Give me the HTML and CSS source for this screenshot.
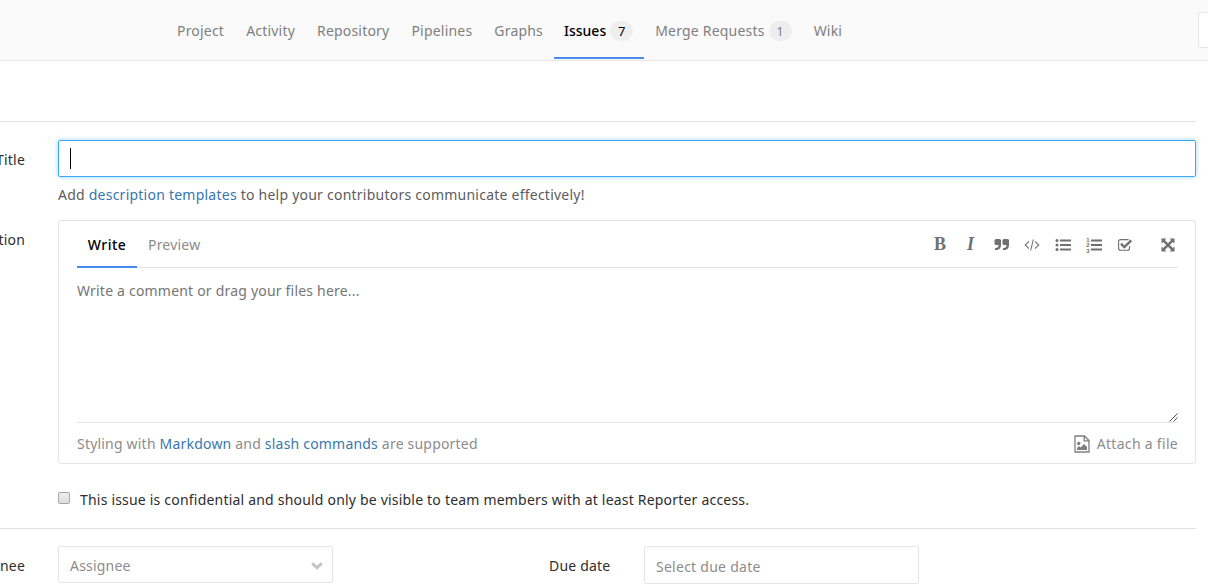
FILE: index.html
```html
<!DOCTYPE html>
<html lang="en">
<head>
<meta charset="utf-8">
<title>New Issue</title>
<link rel="stylesheet" href="styles.css">
</head>
<body>
<header class="topbar">
  <nav class="nav">
    <a class="nav-item">Project</a>
    <a class="nav-item">Activity</a>
    <a class="nav-item">Repository</a>
    <a class="nav-item">Pipelines</a>
    <a class="nav-item">Graphs</a>
    <a class="nav-item active"><span class="nav-text">Issues</span><span class="badge">7</span></a>
    <a class="nav-item"><span class="nav-text">Merge Requests</span><span class="badge">1</span></a>
    <a class="nav-item">Wiki</a>
  </nav>
  <div class="settings"></div>
</header>
<main class="form">
  <div class="row title-row">
    <label class="label">Title</label>
    <div class="field">
      <div class="title-input"><span class="caret"></span></div>
      <p class="hint">Add <a class="link">description templates</a> to help your contributors communicate effectively!</p>
    </div>
  </div>
  <div class="row">
    <label class="label desc-label">Description</label>
    <div class="editor">
      <div class="editor-head">
        <div class="tab tab-active">Write</div>
        <div class="tab tab-preview">Preview</div>
        <div class="tools">
          <span class="tool bold">B</span>
          <span class="tool italic">I</span>
          <span class="tool quote"><svg width="16" height="16" viewBox="0 0 16 16"><path fill="currentColor" d="M2 2h3.500Q7 2 7 3.500V8Q7 13 1.800 13H1v-2h.8Q4.500 11 4.500 8H2Q.5 8 .5 6.500v-3Q.5 2 2 2zM10 2h3.500Q15 2 15 3.500V8Q15 13 9.800 13H9v-2h.8Q12.500 11 12.500 8H10Q8.500 8 8.500 6.500v-3Q8.500 2 10 2z"/></svg></span>
          <span class="tool"><svg width="16" height="16" viewBox="0 0 16 16"><path fill="none" stroke="currentColor" stroke-width="1.050" d="M5 4.300 1.200 8 5 11.700M11 4.300 14.800 8 11 11.700M9.300 2.500 6.700 13.500"/></svg></span>
          <span class="tool"><svg width="16" height="16" viewBox="0 0 16 16" fill="currentColor"><circle cx="2" cy="3.500" r="1.500"/><circle cx="2" cy="8" r="1.500"/><circle cx="2" cy="12.500" r="1.500"/><path d="M5 2.500h11v2H5zM5 7h11v2H5zM5 11.500h11v2H5z"/></svg></span>
          <span class="tool"><svg width="16" height="16" viewBox="0 0 16 16" fill="currentColor"><g class="digits"><text x="0.300" y="5">1</text><text x="0.300" y="10.300">2</text><text x="0.300" y="15.600">3</text></g><path d="M5 2.500h11v2H5zM5 7h11v2H5zM5 11.500h11v2H5z"/></svg></span>
          <span class="tool"><svg width="16" height="16" viewBox="0 0 16 16"><path fill="none" stroke="currentColor" stroke-width="1.100" d="M12.500 9v2.200q0 2-2 2H3.600q-2 0-2-2V4.600q0-2 2-2h6.900q.8 0 1.300.3"/><path fill="none" stroke="currentColor" stroke-width="2.400" d="M4 6.700 7.300 10 14.300 3.300"/></svg></span>
          <span class="tool expand"><svg width="16" height="16" viewBox="0 0 16 16"><path fill="currentColor" d="M1.500 1.500h5L4.900 3.100 8 6.300l3.100-3.200-1.600-1.600h5v5l-1.600-1.600L9.700 8l3.200 3.100 1.600-1.600v5h-5l1.600-1.600L8 9.700l-3.100 3.200 1.600 1.600h-5v-5l1.600 1.600L6.300 8 3.100 4.900 1.500 6.500z"/></svg></span>
        </div>
      </div>
      <div class="editor-body">
        <span class="placeholder">Write a comment or drag your files here...</span>
        <svg class="grip" width="9" height="9" viewBox="0 0 9 9"><path stroke="#555" stroke-width="1" d="M.5 8.500 8.500.5M4.500 8.500l4-4"/></svg>
      </div>
      <div class="editor-foot">
        <span class="styling">Styling with <a class="link">Markdown</a> and <a class="link">slash commands</a> are supported</span>
        <span class="attach"><svg width="16" height="18" viewBox="0 0 16 18"><path fill="none" stroke="currentColor" stroke-width="1.300" d="M1 1h9.500L15 5.500V17H1zM10.200 1v4.800H15"/><circle cx="4.700" cy="8.500" r="1.700" fill="currentColor"/><path fill="currentColor" d="M3 15v-2l2-2 1.500 1.500L10 9l3 3v3z"/></svg><span class="attach-text">Attach a file</span></span>
      </div>
    </div>
  </div>
  <div class="confidential"><span class="checkbox"></span><span class="conf-text">This issue is confidential and should only be visible to team members with at least Reporter access.</span></div>
  <div class="row meta">
    <label class="label">Assignee</label>
    <div class="select"><span class="select-text">Assignee</span><svg width="12" height="8" viewBox="0 0 12 8"><path fill="none" stroke="#c4c4c4" stroke-width="3" d="M1.200 1.300 6 5.700l4.800-4.400"/></svg></div>
    <label class="due-label">Due date</label>
    <div class="date"><span class="date-text">Select due date</span></div>
  </div>
</main>
</body>
</html>
```
FILE: styles.css
```css
* { box-sizing: border-box; }
body { margin: 0; width: 1208px; height: 588px; overflow: hidden; background: #fff; color: #2e2e2e; font: 14px/20px "Noto Sans", sans-serif; letter-spacing: .2px; }
.topbar { height: 61px; background: #fafafa; border-bottom: 1px solid #e5e5e5; display: flex; justify-content: space-between; align-items: flex-start; overflow: hidden; }
.nav { display: flex; padding-left: 166px; color: #7f7f7f; }
.nav-item { height: 59px; padding: 21px 11px 0; display: flex; align-items: flex-start; white-space: nowrap; }
.active { color: #000; border-bottom: 2px solid #4a8bee; padding-left: 10px; }
.active .nav-text { font-weight: 500; letter-spacing: 0; }
.badge { height: 20px; width: 23px; margin-left: 4px; border-radius: 10px; background: #eee; font-size: 13px; text-align: center; }
.settings { width: 20px; height: 36px; margin: 12px -10px 0 0; background: #fff; border: 1px solid #e5e5e5; border-radius: 3px; }
.link { color: #3777b0; }
.form { width: 1196px; margin-top: 60px; border-top: 1px solid #e1e1e1; }
.row { display: flex; }
.title-row { padding-top: 18px; height: 98px; }
.label { width: 25px; margin-right: 33px; flex: none; display: flex; justify-content: flex-end; line-height: 39px; }
.field { flex: 1; }
.title-input { height: 37px; padding: 7px 11px; border: 1px solid #3aabf0; border-radius: 2px; box-shadow: 0 0 5px #3aabf080; }
.caret { display: block; width: 1px; height: 21px; background: #000; }
.hint { margin: 8px 0 0; color: #5c5c5c; white-space: nowrap; letter-spacing: .235px; }
.editor { flex: 1; height: 244px; border: 1px solid #e5e5e5; border-radius: 3px; padding: 0 17px 0 18px; }
.editor-head { height: 47px; display: flex; border-bottom: 1px solid #e5e5e5; }
.tab { height: 47px; line-height: 47px; }
.tab-active { width: 60px; text-align: center; color: #000; font-weight: 500; letter-spacing: .5px; border-bottom: 2px solid #4a8bee; }
.tab-preview { margin-left: 11px; color: #8c8c8c; }
.tools { margin-left: auto; display: flex; align-items: center; gap: 15px; padding-top: 1px; color: #707070; }
.tool { width: 16px; height: 16px; display: flex; align-items: center; justify-content: center; }
.bold { font: bold 18px "Liberation Serif", serif; padding-left: 2px; }
.italic { font: italic bold 18px "Liberation Serif", serif; padding-left: 1px; }
.quote { padding-left: 1px; }
.quote svg { flex: none; }
.expand { margin-left: 12px; margin-right: 2px; }
.digits { font: bold 6px "Liberation Sans", sans-serif; }
.editor-body { height: 155px; display: flex; justify-content: space-between; padding-top: 13px; border-bottom: 1px solid #e5e5e5; color: #757575; }
.grip { align-self: flex-end; }
.editor-foot { height: 41px; display: flex; justify-content: space-between; align-items: center; color: #8c8c8c; white-space: nowrap; }
.attach { display: flex; align-items: center; gap: 7px; color: #7f7f7f; letter-spacing: .3px; }
.attach-text { color: #8c8c8c; }
.confidential { height: 64px; padding: 26px 0 0 58px; display: flex; white-space: nowrap; }
.checkbox { width: 12px; height: 12px; margin: 2px 10px 0 0; border: 1px solid #a6a6a6; border-radius: 2px; background: linear-gradient(#eee, #ddd); }
.meta { border-top: 1px solid #e1e1e1; padding-top: 17px; }
.select { width: 275px; height: 37px; border: 1px solid #e5e5e5; border-radius: 2px; padding: 2px 9px 0 11px; display: flex; align-items: center; justify-content: space-between; color: #8c8c8c; }
.due-label { width: 62px; margin: 0 33px 0 216px; line-height: 39px; white-space: nowrap; }
.date { width: 275px; height: 38px; border: 1px solid #e5e5e5; border-radius: 2px; padding: 1px 11px 0; line-height: 37px; color: #8c8c8c; letter-spacing: .26px; }
```
